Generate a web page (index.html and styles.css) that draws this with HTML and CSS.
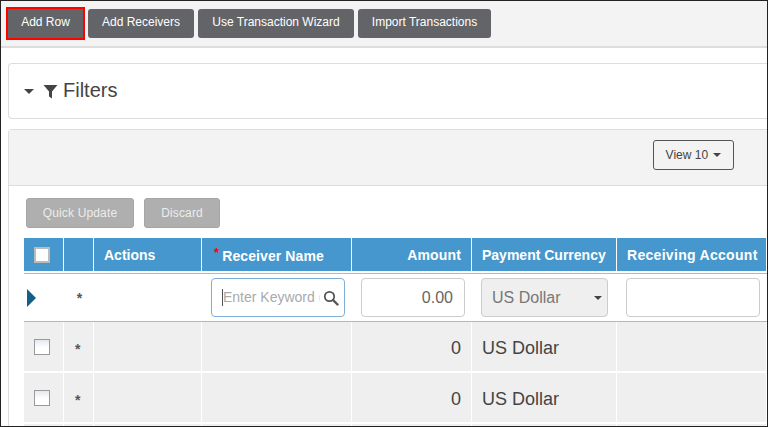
FILE: index.html
```html
<!DOCTYPE html>
<html lang="en">
<head>
    <meta charset="UTF-8">
    <title>Transactions</title>
    <link rel="stylesheet" href="styles.css">
</head>
<body>
    <div class="frame">
        <div class="toolbar">
            <button class="btn btn-row">Add Row</button>
            <button class="btn btn-receivers">Add Receivers</button>
            <button class="btn btn-wizard">Use Transaction Wizard</button>
            <button class="btn btn-import">Import Transactions</button>
        </div>

        <div class="panel filters">
            <span class="caret caret-filters"></span>
            <svg class="funnel" width="15" height="15" viewBox="0 0 15 15"><path d="M0.5 1h14L9 7.5V14.500L6 12.500V7.500z" fill="#444"/></svg>
            <span class="filters-title">Filters</span>
        </div>

        <div class="panel grid-panel">
            <div class="grid-head">
                <button class="view-btn">View 10 <span class="caret caret-view"></span></button>
            </div>
            <div class="grid-body">
                <div class="grid-actions">
                    <button class="btn-off btn-quick">Quick Update</button>
                    <button class="btn-off btn-discard">Discard</button>
                </div>
                <table>
                    <colgroup>
                        <col class="c-check"><col class="c-star"><col class="c-actions"><col class="c-name">
                        <col class="c-amount"><col class="c-currency"><col class="c-account">
                    </colgroup>
                    <thead>
                        <tr>
                            <th><span class="check check-head"></span></th>
                            <th></th>
                            <th>Actions</th>
                            <th class="name-head"><span class="req">*</span>Receiver Name</th>
                            <th class="right">Amount</th>
                            <th>Payment Currency</th>
                            <th class="account-head">Receiving Account</th>
                        </tr>
                    </thead>
                    <tbody>
                        <tr class="edit-row">
                            <td><span class="arrow"></span></td>
                            <td class="star star-edit">*</td>
                            <td></td>
                            <td>
                                <div class="field field-focus">
                                    <span class="cursor"></span>
                                    <span class="placeholder">Enter Keyword (</span>
                                    <svg class="search" width="16" height="16" viewBox="0 0 16 16"><circle cx="6.500" cy="6.500" r="4.700" fill="none" stroke="#555" stroke-width="1.800"/><path d="M10 10l4.500 4.500" stroke="#555" stroke-width="2.400" stroke-linecap="round"/></svg>
                                </div>
                            </td>
                            <td><div class="field field-amount">0.00</div></td>
                            <td class="select-cell">
                                <div class="field field-select">US Dollar<span class="caret caret-select"></span></div>
                            </td>
                            <td><div class="field"></div></td>
                        </tr>
                        <tr class="data-row">
                            <td><span class="check"></span></td>
                            <td class="star">*</td>
                            <td></td>
                            <td></td>
                            <td class="val right">0</td>
                            <td class="val">US Dollar</td>
                            <td></td>
                        </tr>
                        <tr class="data-row">
                            <td><span class="check"></span></td>
                            <td class="star">*</td>
                            <td></td>
                            <td></td>
                            <td class="val right">0</td>
                            <td class="val">US Dollar</td>
                            <td></td>
                        </tr>
                        <tr class="data-row">
                            <td></td><td></td><td></td><td></td><td></td><td></td><td></td>
                        </tr>
                    </tbody>
                </table>
            </div>
        </div>
    </div>
</body>
</html>
```

FILE: styles.css
```css
* {
    box-sizing: border-box;
}

html, body {
    margin: 0;
    padding: 0;
    background: #fff;
}

body {
    font-family: "Liberation Sans", Arial, sans-serif;
    color: #444;
}

.frame {
    width: 768px;
    height: 427px;
    border: 1px solid #222;
    overflow: hidden;
}

.toolbar {
    display: flex;
    align-items: center;
    height: 47px;
    padding: 0 0 1px 7px;
    background: #f3f3f3;
    border-bottom: 2px solid #ddd;
}

.btn {
    height: 29px;
    margin-right: 4px;
    padding: 0 0 2px;
    background: #636468;
    color: #fff;
    border: none;
    border-radius: 3px;
    font: 12px "Liberation Sans", Arial, sans-serif;
}

.btn-row {
    width: 75px;
    margin-right: 5px;
    border-radius: 0;
    outline: 2px solid #f00;
}

.btn-receivers { width: 106px; }
.btn-wizard { width: 156px; }
.btn-import { width: 133px; }

.panel {
    margin-left: 7px;
    border: 1px solid #ddd;
    border-right: none;
    border-radius: 4px 0 0 4px;
}

.filters {
    display: flex;
    align-items: center;
    height: 56px;
    margin-top: 15px;
    padding-left: 15px;
}

.caret {
    display: inline-block;
    width: 0;
    height: 0;
    border-left: 4px solid transparent;
    border-right: 4px solid transparent;
    border-top: 4px solid #444;
}

.caret-filters {
    border-left-width: 5px;
    border-right-width: 5px;
    border-top-width: 5px;
    margin-top: 1px;
}

.funnel {
    margin-left: 9px;
}

.filters-title {
    margin: 0 0 2px 5px;
    font-size: 20px;
}

.grid-panel {
    margin-top: 10px;
    height: 300px;
    border-bottom: none;
}

.grid-head {
    display: flex;
    justify-content: flex-end;
    height: 56px;
    padding: 10px 33px 0 0;
    background: #f3f3f3;
    border-bottom: 1px solid #ddd;
}

.view-btn {
    width: 81px;
    height: 30px;
    padding: 0 0 1px;
    background: #f3f3f3;
    color: #444;
    border: 1px solid #555;
    border-radius: 3px;
    font: 12px "Liberation Sans", Arial, sans-serif;
}

.caret-view {
    margin-left: 2px;
    vertical-align: 2px;
}

.grid-body {
    padding: 12px 0 0 15px;
}

.grid-actions {
    display: flex;
    gap: 10px;
    height: 40px;
    padding-left: 2px;
}

.btn-off {
    height: 30px;
    padding: 0;
    background: #afafaf;
    color: #ececec;
    border: 1px solid #a5a5a5;
    border-radius: 3px;
    font: 12px "Liberation Sans", Arial, sans-serif;
    letter-spacing: 0.15px;
}

.btn-quick { width: 108px; }
.btn-discard { width: 76px; }

table {
    table-layout: fixed;
    width: 743px;
    border-collapse: separate;
    border-spacing: 0;
}

.c-check { width: 40px; }
.c-star { width: 30px; }
.c-actions { width: 108px; }
.c-name { width: 150px; }
.c-amount { width: 120px; }
.c-currency { width: 145px; }
.c-account { width: 150px; }

th {
    height: 35px;
    padding: 0 10px;
    background: #4597cd;
    background-clip: padding-box;
    color: #fff;
    font-size: 14px;
    font-weight: bold;
    text-align: left;
    white-space: nowrap;
    border-right: 1px solid #fff;
    border-bottom: 2px solid #fff;
}

th.right {
    text-align: right;
    letter-spacing: 0.15px;
}

.name-head {
    padding-left: 12px;
    letter-spacing: 0.1px;
}

.account-head {
    letter-spacing: 0.3px;
}

.req {
    color: #f00;
    font-size: 13px;
    margin-right: 3px;
    vertical-align: 4px;
}

.edit-row td {
    height: 49px;
    padding: 0 7px 0 9px;
    border-top: 1px solid #9dbde0;
    border-bottom: 1px solid #9dbde0;
}

.edit-row td:first-child {
    padding: 0 0 0 3px;
}

.edit-row td.select-cell {
    padding-right: 9px;
}

.data-row td {
    height: 51px;
    padding: 0 10px;
    background: #efefef;
    background-clip: padding-box;
    border-right: 1px solid #fff;
    border-bottom: 2px solid #fff;
}

.data-row td.val {
    padding-top: 3px;
    font-size: 18px;
}

.data-row td.right {
    text-align: right;
}

.check {
    display: block;
    width: 16px;
    height: 16px;
    background: linear-gradient(to bottom, #e4e8ee, #fff 55%);
    border: 1px solid #999;
}

.check-head {
    background: #fff;
    border: 2px solid #bbb;
}

.arrow {
    display: block;
    width: 0;
    height: 0;
    border-top: 9px solid transparent;
    border-bottom: 9px solid transparent;
    border-left: 9px solid #155f86;
}

.star {
    font-weight: bold;
    font-size: 14px;
    color: #555;
}

.data-row td.star {
    padding-top: 4px;
    padding-left: 11px;
}

.edit-row td.star-edit {
    padding: 0 0 0 1px;
    text-align: center;
}

.field {
    position: relative;
    height: 39px;
    line-height: 37px;
    background: #fff;
    border: 1px solid #ccc;
    border-radius: 4px;
    font-size: 16px;
    color: #666;
}

.field-focus {
    border-color: #7fadda;
    display: flex;
    align-items: center;
    padding-left: 10px;
    overflow: hidden;
}

.cursor {
    width: 1px;
    height: 17px;
    background: #555;
}

.placeholder {
    flex: 0 0 97px;
    width: 97px;
    overflow: hidden;
    font-size: 14px;
    color: #aaa;
    white-space: nowrap;
}

.search {
    margin-left: 3px;
    flex: none;
}

.field-amount {
    text-align: right;
    padding-right: 11px;
}

.field-select {
    display: flex;
    align-items: center;
    justify-content: space-between;
    padding: 0 5px 0 10px;
    background: #efefef;
    color: #777;
}
```
